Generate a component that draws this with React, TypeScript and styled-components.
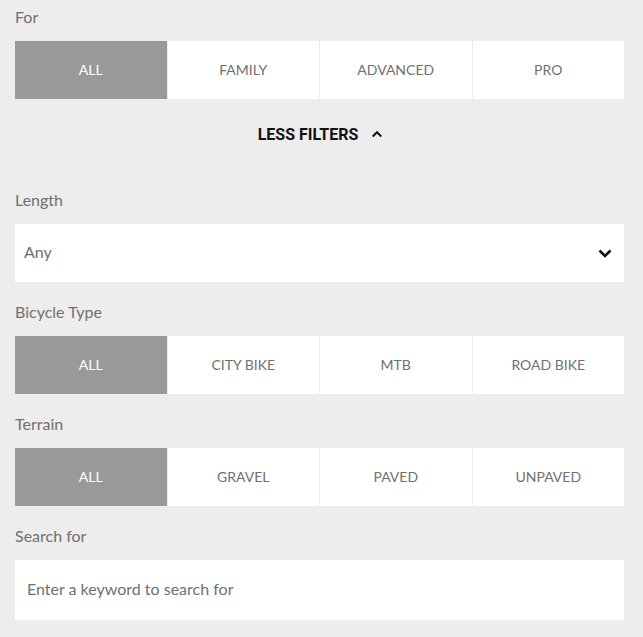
import React, { useState } from 'react';
import styled, { createGlobalStyle } from 'styled-components';

const GlobalStyle = createGlobalStyle`
    html, body {
        margin: 0;
        padding: 0;
        background-color: #ededed;
    }
    body {
        font-family: Lato, "Open Sans", sans-serif;
    }
`

const TEXT_GREY = '#707070';

const Filters = styled.div`
    box-sizing: border-box;
    width: 643px;
    padding: 7px 19px 16px 15px;
    display: flex;
    flex-direction: column;
`

const Label = styled.div<{ first?: boolean }>`
    font-size: 16px;
    line-height: 20px;
    color: ${TEXT_GREY};
    margin-top: ${(props) => props.first ? '0' : '20px'};
    margin-bottom: 14px;
`

const Segments = styled.div`
    display: grid;
    grid-template-columns: repeat(4, 1fr);
    gap: 1px;
    height: 58px;
`

const Segment = styled.button<{ active: boolean }>`
    border: none;
    margin: 0;
    padding: 0 0 1px;
    font-family: Lato, sans-serif;
    font-size: 14px;
    text-transform: uppercase;
    cursor: pointer;
    background-color: ${(props) => props.active ? '#999999' : '#ffffff'};
    color: ${(props) => props.active ? '#ffffff' : TEXT_GREY};
`

const Toggle = styled.button`
    height: 71px;
    border: none;
    background: transparent;
    display: flex;
    align-items: center;
    justify-content: center;
    gap: 13px;
    font-family: Roboto, "Liberation Sans", sans-serif;
    font-weight: 700;
    font-size: 16px;
    color: #111111;
    cursor: pointer;
    padding: 0 0 1px 2px;
    margin: 0;
`

const Select = styled.div`
    height: 58px;
    background-color: #ffffff;
    display: flex;
    align-items: center;
    justify-content: space-between;
    padding: 0 12px 3px 9px;
    box-sizing: border-box;
    font-size: 16px;
    color: ${TEXT_GREY};

    svg {
        margin-top: 3px;
    }
`

const Search = styled.input`
    box-sizing: border-box;
    height: 60px;
    width: 100%;
    border: none;
    outline: none;
    background-color: #ffffff;
    padding: 0 12px 3px;
    font-family: Lato, sans-serif;
    font-size: 16px;
    color: #333;

    &::placeholder {
        color: ${TEXT_GREY};
    }
`

const Chevron = ({ up }: { up?: boolean }) => (
    <svg width="14" height="9" viewBox="0 0 14 9">
        <path
            d={up ? 'M2 7.5 L7 2.5 L12 7.5' : 'M1.5 1.5 L7 7 L12.5 1.5'}
            fill="none"
            stroke="#111"
            strokeWidth={up ? 2.4 : 2.6}
        />
    </svg>
);

const SmallChevron = styled.span`
    display: flex;
    width: 12px;
    svg {
        width: 12px;
        height: 8px;
    }
`

type SegmentedProps = {
    options: string[];
}

const Segmented = ({ options }: SegmentedProps) => {
    const [selected, setSelected] = useState(options[0]);
    return (
        <Segments>
            {options.map((option) => (
                <Segment
                    key={option}
                    active={option === selected}
                    onClick={() => setSelected(option)}
                >
                    {option}
                </Segment>
            ))}
        </Segments>
    );
}

export default function App() {
    return (
        <>
            <GlobalStyle />
            <Filters>
                <Label first>For</Label>
                <Segmented options={['All', 'Family', 'Advanced', 'Pro']} />
                <Toggle>
                    LESS FILTERS
                    <SmallChevron><Chevron up /></SmallChevron>
                </Toggle>
                <Label>Length</Label>
                <Select>
                    Any
                    <Chevron />
                </Select>
                <Label>Bicycle Type</Label>
                <Segmented options={['All', 'City bike', 'MTB', 'Road bike']} />
                <Label>Terrain</Label>
                <Segmented options={['All', 'Gravel', 'Paved', 'Unpaved']} />
                <Label>Search for</Label>
                <Search placeholder="Enter a keyword to search for" />
            </Filters>
        </>
    );
}
